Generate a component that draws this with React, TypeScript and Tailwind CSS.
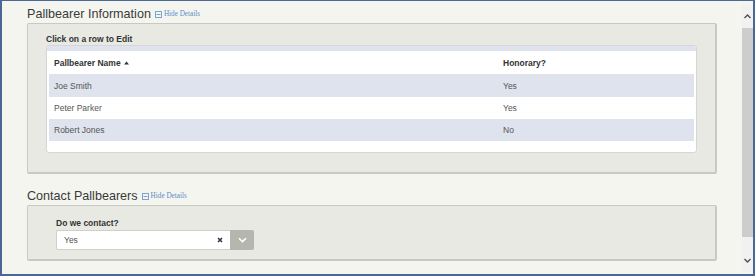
import React from 'react';

interface Bearer {
  name: string;
  honorary: string;
}

const bearers: Bearer[] = [
  { name: 'Joe Smith', honorary: 'Yes' },
  { name: 'Peter Parker', honorary: 'Yes' },
  { name: 'Robert Jones', honorary: 'No' },
];

const HideDetails: React.FC = () => (
  <span className="ml-[4px] inline-flex items-center gap-[2px] text-[7.2px] text-[#5a8ac6] [font-family:'Liberation_Serif',serif]">
    <svg width="7" height="7" viewBox="0 0 7 7">
      <rect x="0.5" y="0.5" width="6" height="6" fill="none" stroke="#7fa3d1" strokeWidth="1" />
      <line x1="1.5" y1="3.5" x2="5.5" y2="3.5" stroke="#7fa3d1" strokeWidth="1" />
    </svg>
    Hide Details
  </span>
);

const SectionTitle: React.FC<{ title: string }> = ({ title }) => (
  <div className="flex items-center h-[17px] leading-[17px]">
    <span className="text-[12.6px] text-[#3a3a3a]">{title}</span>
    <HideDetails />
  </div>
);

const Scrollbar: React.FC = () => (
  <div className="w-[11px] flex flex-col pt-[4px] pb-[2px] bg-[#f5f5f0]">
    <div className="h-[23px] flex items-center justify-center bg-[#f1f1f1]">
      <svg width="7" height="5" viewBox="0 0 7 5">
        <path d="M0.5 4 L3.5 1 L6.5 4" fill="none" stroke="#505050" strokeWidth="1.4" />
      </svg>
    </div>
    <div className="h-[209px] bg-[#cdcdcd]" />
    <div className="flex-1 bg-[#f1f1f1] flex items-end justify-center pb-[9px]">
      <svg width="7" height="5" viewBox="0 0 7 5">
        <path d="M0.5 1 L3.5 4 L6.5 1" fill="none" stroke="#505050" strokeWidth="1.4" />
      </svg>
    </div>
  </div>
);

export default function App() {
  return (
    <div className="w-[755px] h-[276px] flex bg-[#f5f5f0] border-t border-b-2 border-l-2 border-r-2 border-[#4a6796] [font-family:'Liberation_Sans',Arial,sans-serif] overflow-hidden">
      <div className="flex-1 px-[25px] pt-[5px]">
        {/* Pallbearer Information */}
        <SectionTitle title="Pallbearer Information" />
        <div className="bg-[#e8e9e3] border border-[#c8c9c1] border-b-2 border-r-2 rounded-[2px] px-[18px] pt-[10px] pb-[19px]">
          <div className="text-[8.5px] font-bold text-[#333] leading-[11px]">Click on a row to Edit</div>
          <div className="bg-white rounded-[3px] border border-[#d6d6d6] overflow-hidden">
            <div className="h-[5px] bg-[#dfe3ee]" />
            <div className="px-[2px] pt-[1px] pb-[11px]">
              <div className="grid grid-cols-[449px_1fr] h-[23px] items-center border-b border-[#e3e3e3] text-[8.5px] font-bold text-[#333]">
                <div className="px-[5px] flex items-center gap-[3px]">
                  Pallbearer Name
                  <svg width="5" height="4" viewBox="0 0 5 4">
                    <path d="M0 3.5 L2.5 0.5 L5 3.5 Z" fill="#333" />
                  </svg>
                </div>
                <div className="px-[5px]">Honorary?</div>
              </div>
              {bearers.map((b, i) => (
                <div
                  key={b.name}
                  className={`grid grid-cols-[449px_1fr] h-[22px] items-center text-[8.5px] text-[#555] ${
                    i % 2 === 0 ? 'bg-[#dfe3ee]' : 'bg-white'
                  }`}
                >
                  <div className="px-[5px]">{b.name}</div>
                  <div className="px-[5px]">{b.honorary}</div>
                </div>
              ))}
            </div>
          </div>
        </div>

        {/* Contact Pallbearers */}
        <div className="mt-[14px]">
          <SectionTitle title="Contact Pallbearers" />
        </div>
        <div className="bg-[#e8e9e3] border border-[#c8c9c1] border-b-2 border-r-2 rounded-[2px] pl-[28px] pt-[12px] pb-[9px]">
          <div className="text-[8.5px] font-bold text-[#333] leading-[11px] mb-[1px]">Do we contact?</div>
          <div className="flex w-[198px] h-[20px]">
            <div className="flex-1 flex items-center justify-between bg-white border border-[#d0d0c8] border-r-0 rounded-l-[2px] pl-[7px] pr-[7px]">
              <span className="text-[8.5px] text-[#555]">Yes</span>
              <svg width="6" height="6" viewBox="0 0 6 6">
                <path d="M1 1 L5 5 M5 1 L1 5" stroke="#2f3a48" strokeWidth="1.6" />
              </svg>
            </div>
            <div className="w-[24px] flex items-center justify-center bg-[#b5b6ae] rounded-r-[2px]">
              <svg width="9" height="6" viewBox="0 0 9 6">
                <path d="M1 1.2 L4.5 4.6 L8 1.2" fill="none" stroke="#ffffff" strokeWidth="1.6" />
              </svg>
            </div>
          </div>
        </div>
      </div>
      <Scrollbar />
    </div>
  );
}
